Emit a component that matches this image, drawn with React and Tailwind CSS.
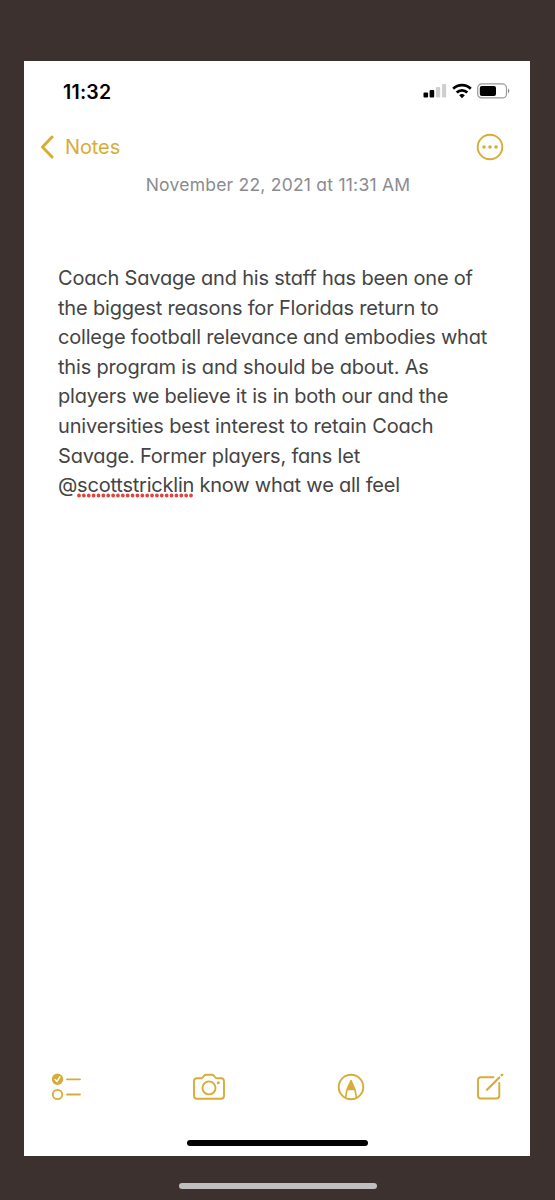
import clsx from "clsx"

const lines = [
  { text: "Coach Savage and his staff has been one of", tracking: "tracking-[-0.19px]" },
  { text: "the biggest reasons for Floridas return to", tracking: "tracking-[-0.18px]" },
  { text: "college football relevance and embodies what", tracking: "tracking-[-0.185px]" },
  { text: "this program is and should be about. As", tracking: "tracking-[-0.18px]" },
  { text: "players we believe it is in both our and the", tracking: "tracking-[-0.21px]" },
  { text: "universities best interest to retain Coach", tracking: "tracking-[-0.15px]" },
  { text: "Savage. Former players, fans let", tracking: "tracking-[-0.19px]" },
];

function Signal() {
  return (
    <svg width="24" height="16" viewBox="0 0 24 16">
      <rect x="0.5" y="9.5" width="4.6" height="5" rx="1" fill="#000" />
      <rect x="6.6" y="7" width="4.6" height="7.5" rx="1" fill="#000" />
      <rect x="13" y="4" width="4.2" height="10.5" rx="1" fill="#cfcfcf" />
      <rect x="19" y="1" width="4.2" height="13.5" rx="1" fill="#cfcfcf" />
    </svg>
  )
}

function Wifi() {
  return (
    <svg width="20" height="16" viewBox="0 0 20 16" fill="none" stroke="#000" strokeWidth="2.7">
      <path d="M1.2 5.7a12.6 12.6 0 0 1 17.6 0" />
      <path d="M4.7 9.5a7.6 7.6 0 0 1 10.6 0" />
      <path d="M10 15.2L7.2 12.3a4 4 0 0 1 5.6 0z" fill="#000" stroke="none" />
    </svg>
  )
}

function Battery() {
  return (
    <svg width="33" height="16" viewBox="0 0 33 16">
      <rect x="0.7" y="0.9" width="28.8" height="14" rx="4" fill="none" stroke="#999" strokeWidth="1.2" />
      <rect x="2.8" y="3" width="16.2" height="10" rx="2" fill="#000" />
      <path d="M31 5.6c1.8.8 1.8 3.8 0 4.6z" fill="#888" />
    </svg>
  )
}

function Chevron() {
  return (
    <svg width="16" height="24" viewBox="0 0 16 24" fill="none" stroke="currentColor" strokeWidth="3" strokeLinecap="round" strokeLinejoin="round">
      <path d="M13 2L3.5 12l9.500 10" />
    </svg>
  )
}

function More() {
  return (
    <svg width="28" height="28" viewBox="0 0 28 28" fill="currentColor">
      <circle cx="14" cy="14" r="12.3" fill="none" stroke="currentColor" strokeWidth="1.9" />
      <circle cx="8" cy="14" r="1.8" />
      <circle cx="14" cy="14" r="1.8" />
      <circle cx="20" cy="14" r="1.8" />
    </svg>
  )
}

function Checklist() {
  return (
    <svg width="30" height="28" viewBox="0 0 30 28" fill="none" stroke="currentColor" strokeLinecap="round" strokeLinejoin="round">
      <circle cx="5.5" cy="6.2" r="5.7" fill="currentColor" stroke="none" />
      <path d="M3.1 6.5l1.8 2.1 3-4.8" stroke="#fff" strokeWidth="1.4" />
      <circle cx="5.5" cy="21.5" r="4.7" strokeWidth="1.8" />
      <path d="M15 6.3h13M15 21.5h13" strokeWidth="1.8" />
    </svg>
  )
}

function Camera() {
  return (
    <svg width="32" height="28" viewBox="0 0 32 28" fill="none" stroke="currentColor" strokeWidth="1.9" strokeLinejoin="round">
      <path d="M4 5.2h4.3c.7 0 1-.2 1.4-.7l1.5-1.8c.6-.7 1.1-.9 2-.9h5.6c.9 0 1.4.2 2 .9l1.5 1.8c.4.5.7.7 1.400.7H28c1.900 0 3 1.100 3 3v14.600c0 1.900-1.100 3-3 3H4c-1.900 0-3-1.100-3-3V8.200c0-1.900 1.100-3 3-3z" />
      <circle cx="16" cy="14.9" r="6.5" />
      <circle cx="25.3" cy="9.8" r="1.5" fill="currentColor" stroke="none" />
    </svg>
  )
}

function Markup() {
  return (
    <svg width="28" height="28" viewBox="0 0 28 28" fill="none" stroke="currentColor" strokeWidth="1.9" strokeLinejoin="round">
      <circle cx="14" cy="14" r="12.3" />
      <path d="M8.6 24.5L10 16.500L14 7.500L18 16.500L19.400 24.500M10 16.500h8" strokeWidth="1.6" />
      <path d="M14 7.2L10.2 16.200h7.600z" fill="currentColor" stroke="none" />
    </svg>
  )
}

function Compose() {
  return (
    <svg width="28" height="28" viewBox="0 0 28 28" fill="none" stroke="currentColor" strokeWidth="1.9" strokeLinecap="round" strokeLinejoin="round">
      <path d="M17.500 4.200H5c-2 0-3 1-3 3v15.300c0 2 1 3 3 3h15.300c2 0 3-1 3-3V10" />
      <path d="M11 16.800L23.300 4.500" strokeWidth="2.2" />
      <path d="M25.800 2.100l.3-.3" strokeWidth="2.600" />
    </svg>
  )
}

export default function App() {
  return (
    <div className="w-[555px] h-[1200px] bg-[#3d312f] pt-[61px] pl-6 flex flex-col font-['Inter',sans-serif] [font-feature-settings:'cv11']">
      <div className="w-[506px] h-[1095px] bg-white flex flex-col">
        {/* Status bar */}
        <div className="h-[61px] flex items-center justify-between pl-[39px] pr-5">
          <span className="pt-0.5 text-[19.5px] font-semibold text-black tracking-[0.2px]">11:32</span>
          <div className="flex items-center gap-[5px] pb-px">
            <Signal />
            <Wifi />
            <Battery />
          </div>
        </div>

        {/* Nav */}
        <div className="h-[50px] flex items-center justify-between pl-[15px] pr-[26px] text-[#d9ac38]">
          <div className="flex items-center gap-[10px]">
            <Chevron />
            <span className="text-[20px] tracking-[-0.1px]">Notes</span>
          </div>
          <More />
        </div>

        <p className="h-[26px] leading-[26px] pl-[2px] text-center text-[17.5px] tracking-[0.23px] text-[#8b8b90]">
          <span>November 22, 2021 at 11:31 AM</span>
        </p>

        {/* Note */}
        <div className="mt-[66px] pl-[34px] text-[20px] leading-[29.6px] text-[#444]">
          {lines.map((line) => (
            <p key={line.text} className="whitespace-nowrap">
              <span className={clsx(line.tracking)}>{line.text}</span>
            </p>
          ))}
          <p className="whitespace-nowrap tracking-[-0.22px]">
            @
            <span className="relative">
              scottstricklin
              <svg className="absolute left-0 top-[20px]" width="117" height="5" viewBox="0 0 117 5">
                <path d="M2 2.5H116" stroke="#e0443e" strokeWidth="3.8" strokeLinecap="round" strokeDasharray="0 4.87" />
              </svg>
            </span>
            {" "}know what we all feel
          </p>
        </div>

        {/* Toolbar */}
        <div className="mt-auto h-7 mb-[39px] pl-7 pr-[26px] flex items-center justify-between text-[#d9ac38]">
          <Checklist />
          <Camera />
          <Markup />
          <Compose />
        </div>
        <div className="w-[181px] h-[6px] mb-[10px] ml-[163px] rounded-full bg-black" />
      </div>

      <div className="w-[198px] h-[6px] mt-[27px] ml-[155px] rounded-full bg-[#bfbfbf]" />
    </div>
  )
}
